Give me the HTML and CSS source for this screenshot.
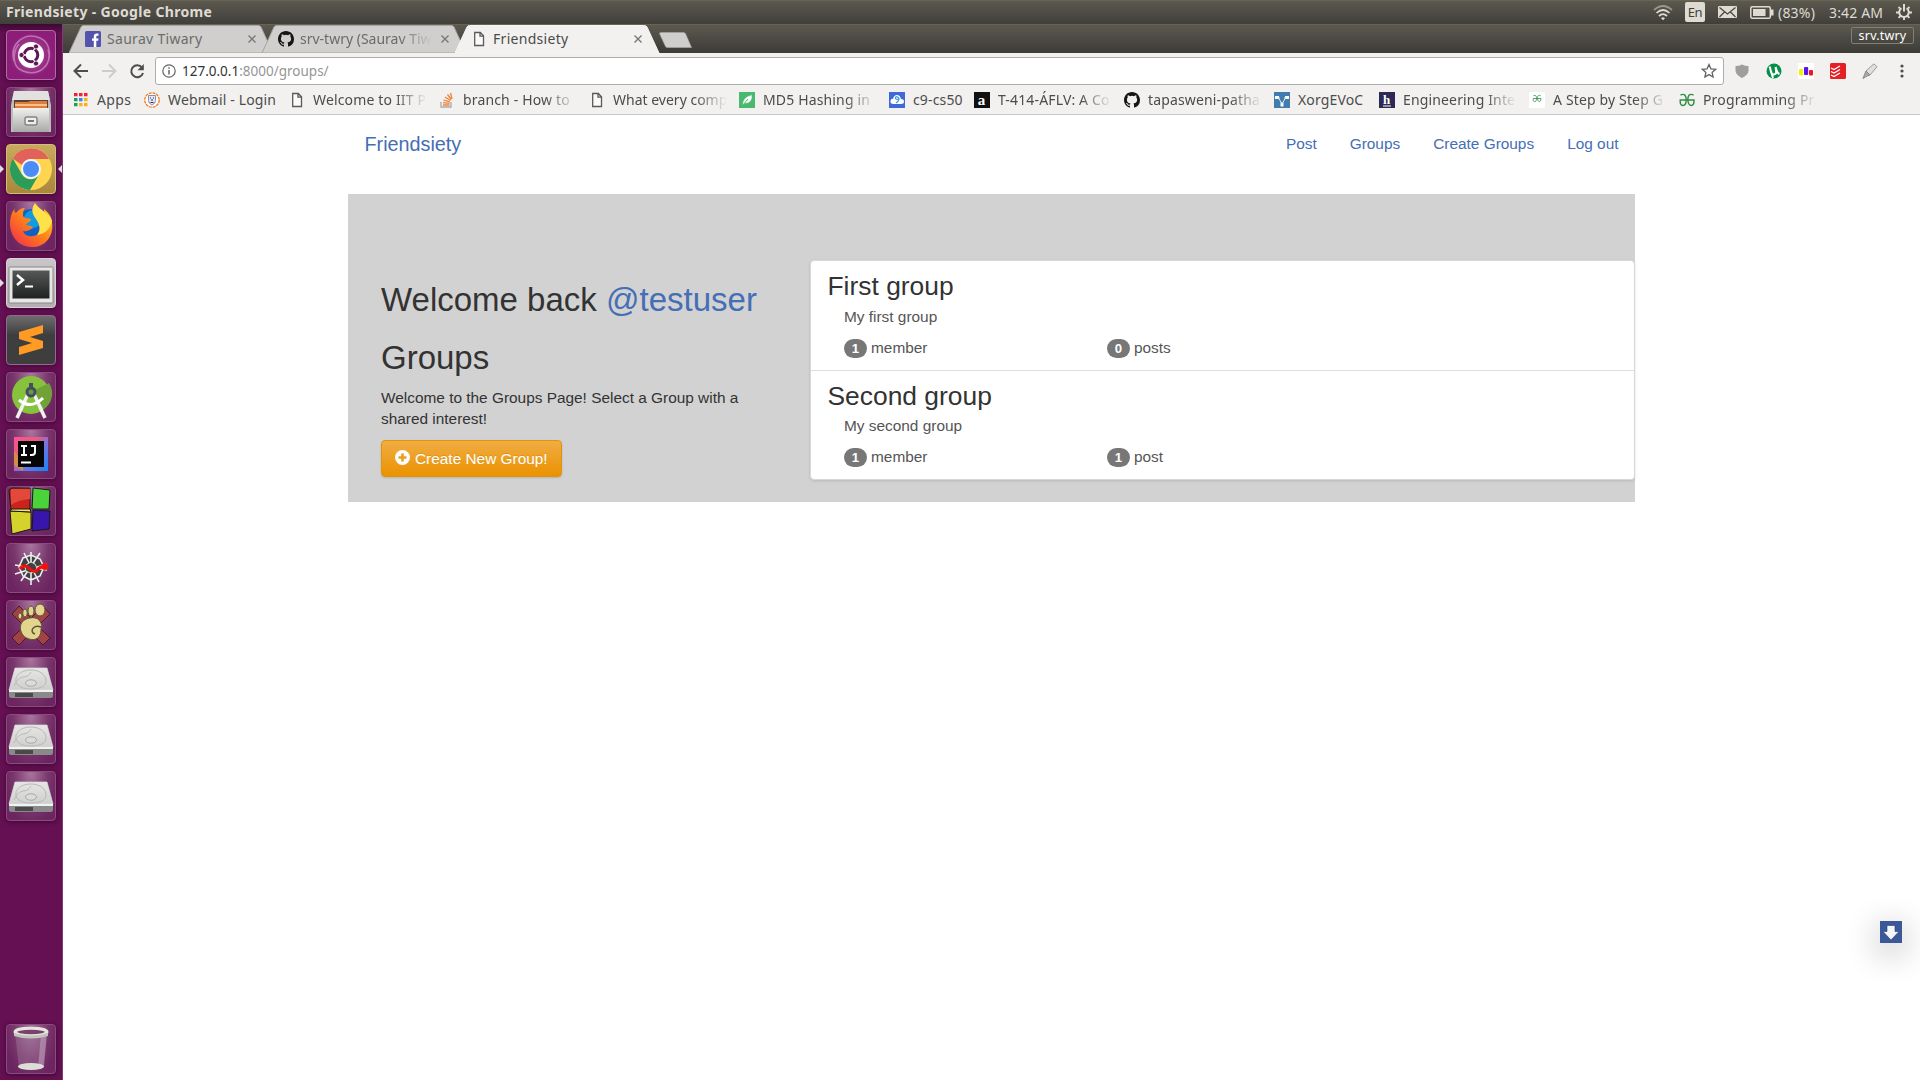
FILE: index.html
```html
<!DOCTYPE html>
<html lang="en">
<head>
<meta charset="utf-8">
<title>Friendsiety</title>
<link rel="stylesheet" href="styles.css">
</head>
<body>
<svg class="defs" width="0" height="0" aria-hidden="true">
  <defs>
    <linearGradient id="metal" x1="0" y1="0" x2="0" y2="1"><stop offset="0" stop-color="#f0f0ef"/><stop offset="1" stop-color="#a9a9a8"/></linearGradient>
    <linearGradient id="platter" x1="0" y1="0" x2="0" y2="1"><stop offset="0" stop-color="#e6e6e5"/><stop offset="1" stop-color="#cfcfce"/></linearGradient>
    <linearGradient id="dark" x1="0" y1="0" x2="0" y2="1"><stop offset="0" stop-color="#555856"/><stop offset="1" stop-color="#1f2221"/></linearGradient>
    <linearGradient id="foxfire" x1="1" y1="0" x2="0" y2="1"><stop offset="0" stop-color="#ffd52b"/><stop offset=".5" stop-color="#ff7b1c"/><stop offset="1" stop-color="#ef2352"/></linearGradient>
    <linearGradient id="rim" x1="0" y1="0" x2="1" y2="1"><stop offset="0" stop-color="#fe5196"/><stop offset=".35" stop-color="#ee5a7c"/><stop offset=".6" stop-color="#6b77e8"/><stop offset="1" stop-color="#1684fa"/></linearGradient>
    <symbol id="page" viewBox="0 0 16 16"><path d="M3.7 1.5h5.6l3.2 3.3v9.7H3.7zM9 1.7v3.4h3.3" fill="#fafafa" stroke="#5a5a5a" stroke-width="1.3"/></symbol>
    <symbol id="github" viewBox="0 0 16 16"><path fill="#161616" d="M8 0C3.58 0 0 3.58 0 8c0 3.54 2.29 6.53 5.47 7.59.4.07.55-.17.55-.38 0-.19-.01-.82-.01-1.49-2.01.37-2.53-.49-2.69-.94-.09-.23-.48-.94-.82-1.13-.28-.15-.68-.52-.01-.53.63-.01 1.08.58 1.23.82.72 1.21 1.87.87 2.33.66.07-.52.28-.87.51-1.07-1.78-.2-3.64-.89-3.64-3.95 0-.87.31-1.59.82-2.15-.08-.2-.36-1.02.08-2.12 0 0 .67-.21 2.2.82a7.6 7.6 0 0 1 4 0c1.53-1.04 2.2-.82 2.2-.82.44 1.1.16 1.92.08 2.12.51.56.82 1.27.82 2.15 0 3.07-1.87 3.75-3.65 3.95.29.25.54.73.54 1.48 0 1.07-.01 1.93-.01 2.2 0 .21.15.46.55.38A8 8 0 0 0 16 8c0-4.42-3.58-8-8-8z"/></symbol>
    <symbol id="gg" viewBox="0 0 16 16"><path d="M1.500 3C6 1 7.200 4 7.200 8s-1.500 5.500-3.500 5.500S1 11.500 1.200 8H15q.2 5.500-2.700 5.500T8.800 8c0-4 1.200-7 5.700-5" fill="none" stroke="#2f8d46" stroke-width="1.4"/></symbol>
    <symbol id="disk" viewBox="0 0 50 50"><path d="M9 11h32l6 22H3z" fill="url(#platter)" stroke="#ddd" stroke-width=".7"/><path d="M3 33h44v6a2 2 0 0 1-2 2H5a2 2 0 0 1-2-2z" fill="#8a8a8a"/><path d="M3 33h44v2H3z" fill="#f2f2f2"/><path d="M9 36h18v4H9z" fill="#4a4a4a"/><path d="M11 27c-4-7 3-14 14-14 9 0 15 5 15 11s-7 8-16 8c-6 0-11-2-13-5M8 29c6-14 12-5 17-14" fill="none" stroke="#b9b9b9"/><ellipse cx="25" cy="26" rx="5.500" ry="3.200" fill="#dcdcdc" stroke="#aaa"/></symbol>
    <symbol id="shape" viewBox="0 0 206 28"><path d="M0 28 12 2q.8-1.500 2.500-1.500h175q1.500 0 2.500 1.500l12 26z"/></symbol>
  </defs>
</svg>

<div class="desktop">
  <header class="panel">
    <span class="panel-title">Friendsiety - Google Chrome</span>
    <div class="indicators">
      <svg class="i-wifi" width="20" height="17" viewBox="0 0 20 17" fill="none" stroke="#dfdbd2" stroke-width="1.700"><path d="M1 6q9-8 18 0" stroke="#9b978d"/><path d="M3.500 9q6.500-6 13 0M6 12q4-3.600 8 0"/><path d="M8 14.200q2-1.700 4 0l-2 2z" fill="#dfdbd2" stroke="none"/></svg>
      <span class="lang">En</span>
      <svg class="i-mail" width="19" height="12" viewBox="0 0 19 12"><rect width="19" height="12" rx="1" fill="#dfdbd2"/><path d="M1.500 1.500 9.500 8l8-6.500M1.500 11l5-5M17.500 11l-5-5" fill="none" stroke="#45443f" stroke-width="1.200"/></svg>
      <svg class="i-bat" width="24" height="13" viewBox="0 0 24 13"><rect x=".8" y=".8" width="19.500" height="11.400" rx="1.500" fill="none" stroke="#dfdbd2" stroke-width="1.500"/><path d="M3 3h12.500v7H3zM21 3.500h2.500v6H21z" fill="#dfdbd2"/></svg>
      <span class="bat">(83%)</span>
      <span class="clock">3:42 AM</span>
      <svg width="16" height="16" viewBox="0 0 16 16" fill="none" stroke="#dfdbd2"><path d="M5.400 4.200a4.800 4.800 0 1 0 5.200 0" stroke-width="2"/><path d="M8 0v7.500" stroke-width="2"/><path d="M3.800 4.300 2.500 3M12.200 4.300 13.500 3M3 8.500H0M13 8.500h3M4.400 12l-1.800 1.800M11.600 12l1.800 1.800M8 13.500V16" stroke-width="1.900"/></svg>
    </div>
  </header>

  <aside class="launcher">
    <div class="tile dash"><svg viewBox="0 0 50 50"><path d="M8 31C3 12 20 2 34 8c11 5 12 20 5 29M42 19c5 17-10 28-25 22C5 37 7 21 13 14" fill="none" stroke="#d391c7" stroke-width="1.500" opacity=".7"/><circle cx="25" cy="25" r="13" fill="#fff"/><circle cx="25" cy="25" r="6.800" fill="none" stroke="#5e1752" stroke-width="3"/><path d="m25 25-10 0M25 25l5-9M25 25l5 9" stroke="#fff" stroke-width="1.300"/><g fill="#5e1752" stroke="#fff" stroke-width=".7"><circle cx="15.500" cy="25" r="2.500"/><circle cx="30" cy="16.500" r="2.500"/><circle cx="30" cy="33.500" r="2.500"/></g></svg></div>
    <div class="tile"><svg viewBox="0 0 50 50"><path d="M8 4h34l3 14v27H5V18z" fill="#bcbcbb"/><path d="M8 4h34l2 9H6z" fill="#e1e1e0"/><path d="M8 13h34v9H8z" fill="#56423a"/><path d="M9 15h13l2-1h17v8H9z" fill="#e07b38"/><path d="M9 17h32v2H9z" fill="#f6c08e"/><path d="M7 21h36v24H7z" fill="url(#metal)"/><rect x="19" y="30" width="12" height="8" rx="2" fill="#eee" stroke="#858585" stroke-width="1.500"/><path d="M22 33h6v2h-6z" fill="#777"/></svg></div>
    <div class="tile chrome run focus"><svg viewBox="0 0 50 50"><circle cx="25" cy="25" r="21" fill="#ffd54f"/><path d="M6.800 14.500A21 21 0 0 1 43.200 15H25a10 10 0 0 0-9 6z" fill="#e0625a"/><path d="M6.800 14.500A21 21 0 0 0 24 46l9-15.500a10 10 0 0 1-17 0z" fill="#2b9c5a"/><circle cx="25" cy="25" r="10" fill="#f4f4f4"/><circle cx="25" cy="25" r="8" fill="#4b8bf5"/></svg></div>
    <div class="tile"><svg viewBox="0 0 50 50"><circle cx="26" cy="25" r="17" fill="#1260c4"/><circle cx="27" cy="18" r="9" fill="#159ae0"/><path d="M9 7c-5 6-6 15-4 23 3 11 13 17 23 16 13-1 20-13 18-25-1-8-5-10-8-13 1 7 0 9-1 13 1 7-3 13-10 14-6 1-9-2-10-5 4 1 6-1 10-3-1-3-5-2-7-3 2-4 5-3 5-6-3-1-6 0-8-3 0-3 0-6 2-8-4 0-7 2-9 5-2-1-2-3-1-5z" fill="url(#foxfire)"/><path d="M29 2c-5 7-2 12 1 16 4 6 5 11 1 16 9-1 14-8 15-14-2-8-12-10-17-18z" fill="#ffe14a"/></svg></div>
    <div class="tile term run"><svg viewBox="0 0 50 50"><rect x="3" y="9" width="44" height="36" rx="1" fill="#e6e6e5" stroke="#888"/><rect x="6.500" y="12.500" width="37" height="28" fill="url(#dark)"/><path d="m11 17 6 5-6 5" fill="none" stroke="#fff" stroke-width="2.500"/><path d="M19 28.500h8" stroke="#fff" stroke-width="2"/></svg></div>
    <div class="tile sublime"><svg viewBox="0 0 50 50"><path d="m13 17 24-7v8l-13 4 13 4v7l-24 7v-8l13-4-13-4z" fill="#ff9a25"/></svg></div>
    <div class="tile"><svg viewBox="0 0 50 50"><circle cx="25" cy="23" r="19" fill="#87c23c"/><path d="m25 20 18-9a19 19 0 0 1-5 26z" fill="#70a237"/><path d="m22 22-11 24M28 22l11 24" stroke="#f1f1f1" stroke-width="3.500"/><path d="M13 28q12 10 24-2" fill="none" stroke="#fff" stroke-width="3"/><circle cx="25" cy="20" r="4" fill="#6b984c" stroke="#42505a" stroke-width="3"/><path d="M25 11v6" stroke="#42505a" stroke-width="4"/></svg></div>
    <div class="tile"><svg viewBox="0 0 50 50"><path d="M8 8h34v34H8z" fill="url(#rim)"/><path d="M8 22v14l9 6v-9z" fill="#d58d45"/><path d="M12 12h26v26H12z" fill="#060606"/><path d="M15 17h6M18 17v9M15 26h6M25 17h4v6q0 3-3 3h-2M15 33.500h10" stroke="#fff" stroke-width="2" fill="none"/></svg></div>
    <div class="tile"><svg viewBox="0 0 50 50" stroke="#181818"><path d="m3 4 3-2 18 0v22H5z" fill="#c9231b"/><path d="M5 3h19v10q-12 1-19 6z" fill="#e2493a" stroke="none"/><path d="m27 2 17 2-1 19H26z" fill="#4bd33a"/><path d="m4 25 21 1v17L6 48z" fill="#d5d32b"/><path d="m27 24 17 1-1 18-17 2z" fill="#3816ac"/><path d="m4 25 2-2h18l1 3z" fill="#edeb65"/></svg></div>
    <div class="tile"><svg viewBox="0 0 50 50"><path d="m17 15 8-3 9 4 4 8-4 9-9 4-8-4-4-9z" fill="#414141"/><path d="m17 15 8-3 9 4 4 8-4 9-9 4-8-4-4-9zM25 9v33M9 22l32 5M41 21 9 31M18 10l15 29M34 10 15 38" fill="none" stroke="#eee" stroke-width="1.600"/><path d="m21 21 4-2 4 2 2 4-3 4-4 1-4-2-1-4z" fill="#414141" stroke="#ddd"/><path d="M14 26c7-9 10 5 16 2 4-2 3-5 7-4" fill="none" stroke="#ef1010" stroke-width="3.200"/><circle cx="39" cy="23.500" r="3.600" fill="#ef1010"/></svg></div>
    <div class="tile"><svg viewBox="0 0 50 50"><path d="m6 14 7-8 12 12L37 6l7 8-12 12 12 12-7 7-12-12-12 12-7-7 12-12z" fill="#a04345" stroke="#4c1829"/><g fill="#e2d58e" stroke="#5e5334"><path d="M15 24c3-7 15-8 18-4 4 5 2 7 2 10 0 8-6 11-12 9-7-2-10-9-8-15z"/><ellipse cx="34" cy="10" rx="5" ry="6"/><ellipse cx="25" cy="11" rx="3" ry="5"/><ellipse cx="19" cy="13" rx="2.300" ry="4"/><ellipse cx="14" cy="16" rx="2" ry="3"/></g><path d="M35 27c-8-3-12 5-6 7" fill="none" stroke="#5e5334" stroke-width="1.500"/></svg></div>
    <div class="tile"><svg><use href="#disk"/></svg></div>
    <div class="tile"><svg><use href="#disk"/></svg></div>
    <div class="tile"><svg><use href="#disk"/></svg></div>
    <div class="tile trash"><svg viewBox="0 0 50 50"><path d="m9 10 4 33q12 5 24 0l4-33z" fill="#a887a6" opacity=".35"/><path d="m35 10-3 34 6-2 3-32z" fill="#d7c2d4" opacity=".4"/><ellipse cx="25" cy="42.500" rx="13" ry="3.500" fill="#deded9"/><ellipse cx="25" cy="8" rx="16" ry="3.800" fill="#7a416f" stroke="#e6e6df" stroke-width="3"/><path d="M8 9v3q17 5 34 0V9q-17 5-34 0" fill="#c3c3bd"/></svg></div>
  </aside>

  <div class="browser">
    <div class="tabstrip">
      <div class="tab"><svg class="tab-bg"><use href="#shape"/></svg>
        <svg class="fav" viewBox="0 0 16 16"><rect width="16" height="16" rx="1.500" fill="#5254ac"/><path d="M8.800 16V9.800H7V7.400h1.800V5.600c0-2 1-3.100 3-3.100h1.700v2.300h-1.200c-.8 0-1 .4-1 1v1.600h2.200l-.3 2.400h-1.900V16z" fill="#fff"/></svg>
        <span class="tab-text t1">Saurav Tiwary</span><svg class="x" viewBox="0 0 8 8"><path d="m.5.500 7 7m0-7-7 7"/></svg></div>
      <div class="tab"><svg class="tab-bg"><use href="#shape"/></svg>
        <svg class="fav"><use href="#github"/></svg>
        <span class="tab-text t2 fade">srv-twry (Saurav Tiw</span><svg class="x" viewBox="0 0 8 8"><path d="m.5.500 7 7m0-7-7 7"/></svg></div>
      <div class="tab active"><svg class="tab-bg"><use href="#shape"/></svg>
        <svg class="fav"><use href="#page"/></svg>
        <span class="tab-text t3">Friendsiety</span><svg class="x" viewBox="0 0 8 8"><path d="m.5.500 7 7m0-7-7 7"/></svg></div>
      <svg class="newtab" width="33" height="16" viewBox="0 0 33 16"><path d="M2 .5h22.500q1.500 0 2.200 1.500L32.500 15.500H8q-1 0-1.700-1.500L.7 2Q0 .5 2 .5z" fill="#cfcecc" stroke="#aaa9a5" stroke-width=".6"/></svg>
      <span class="profile">srv.twry</span>
    </div>

    <div class="toolbar">
      <svg class="nav" viewBox="0 0 16 16"><path d="M15 8H2M8 1.500 1.500 8 8 14.500" stroke="#4d4d4d"/></svg>
      <svg class="nav" viewBox="0 0 16 16"><path d="M1 8h13M8 1.500 14.500 8 8 14.500" stroke="#cdcccb"/></svg>
      <svg class="nav" viewBox="0 0 16 16"><path d="M13 4.500A6 6 0 1 0 14 10" stroke="#4d4d4d"/><path d="M14.800 1v6.300H8.500z" fill="#4d4d4d"/></svg>
      <div class="omnibox">
        <svg width="14" height="14" viewBox="0 0 14 14"><circle cx="7" cy="7" r="6.200" fill="none" stroke="#666" stroke-width="1.200"/><path d="M7 6v4.500M7 3.200v1.600" stroke="#666" stroke-width="1.500"/></svg>
        <span class="url">127.0.0.1<span class="dim">:8000/groups/</span></span>
        <svg class="star" width="16" height="16" viewBox="0 0 16 16"><path d="m8 1.500 1.900 4.300 4.700.5-3.500 3.100 1 4.600L8 11.600 3.900 14l1-4.600L1.400 6.300l4.700-.5z" fill="none" stroke="#646464" stroke-width="1.300"/></svg>
      </div>
      <div class="exts">
        <svg viewBox="0 0 16 16"><path d="M8 1.500q3 1.500 6.500 1.500v5Q14 12 8 15 2 12 1.500 8V3Q5 3 8 1.500z" fill="#9e9e9e"/></svg>
        <svg viewBox="0 0 16 16"><circle cx="8" cy="8" r="7.500" fill="#078f49"/><path d="M3.500 3.500c2 4 .5 7.500 4 8 3.500 0 3-3 2-7.500M9.500 4c1.500 3 1 6 4 7M5.500 10l1.500 5" fill="none" stroke="#fff" stroke-width="2"/></svg>
        <svg viewBox="0 0 16 16"><path d="M0 0h16v16H0z" fill="#fff"/><rect x="1" y="6" width="4" height="6.500" rx="1" fill="#f5f000"/><rect x="6" y="4" width="4.200" height="8" rx="1" fill="#5a10f5"/><rect x="11" y="7" width="4" height="5.500" rx="1" fill="#f51717"/></svg>
        <svg viewBox="0 0 16 16"><rect width="16" height="16" rx="1.500" fill="#e41f25"/><path d="m1 5 3 1.500L10 3M1 8.500 4 10l6-3.500M1 12l3 1.500L10 10" fill="none" stroke="#fff" stroke-width="1.200"/></svg>
        <svg viewBox="0 0 16 16"><path d="M4 8 12 .8l3 3L8 12z" fill="#e0e0e0" stroke="#999"/><path d="m4 8 4 4-3 1-4 2.500 1.500-4z" fill="#aaa" stroke="#888"/></svg>
        <svg viewBox="0 0 16 16" fill="#4d4d4d"><circle cx="8" cy="3" r="1.600"/><circle cx="8" cy="8" r="1.600"/><circle cx="8" cy="13" r="1.600"/></svg>
      </div>
    </div>

    <div class="bookmarks">
      <div class="bm"><svg viewBox="0 0 16 16"><path d="M0 1h3.500v3.300H0zM5 1h3.500v3.300H5zM10 1h3.500v3.300H10z" fill="#f02236"/><path d="M0 6h3.500v3.300H0zM0 11h3.500v3.300H0z" fill="#15a15c"/><path d="M5 6h3.500v3.300H5z" fill="#4381f3"/><path d="M10 6h3.500v3.300H10zM5 11h3.500v3.300H5zM10 11h3.500v3.300H10z" fill="#f8b316"/></svg><span class="apps">Apps</span></div>
      <div class="bm"><svg viewBox="0 0 16 16"><circle cx="8" cy="8" r="7.200" fill="#fff" stroke="#ed7d22" stroke-width="1.300" stroke-dasharray="3 .8"/><path d="M4.500 3.500h7v5q0 3-3.500 4.500-3.500-1.500-3.500-4.500z" fill="#e6e7ef" stroke="#70749a" stroke-width=".8"/><path d="M6 6h1M9 6h1M8 7v2M6.500 10.500h3" stroke="#292d58"/></svg><span>Webmail - Login</span></div>
      <div class="bm"><svg><use href="#page"/></svg><span class="fade">Welcome to IIT P</span></div>
      <div class="bm"><svg viewBox="0 0 16 16" fill="none"><path d="M2 10v5h10v-5" stroke="#aaa" stroke-width="1.300"/><path d="M4 13h6.500M4 10.700l6.500.7M4.500 8l6.300 1.800M6 5l5.500 3.500M8.500 2.500l3.800 5M11.500 1l1.500 6" stroke="#ef8236" stroke-width="1.300"/></svg><span class="fade">branch - How to</span></div>
      <div class="bm"><svg><use href="#page"/></svg><span class="fade what">What every comp</span></div>
      <div class="bm"><svg viewBox="0 0 16 16"><path d="M0 0h16v16H0z" fill="#48b96f"/><path d="M4 13q0-8 8.500-9.500Q13 11 6 11l4-4" fill="#fff" stroke="#fff" stroke-width=".5"/><path d="m4 13 5-6" stroke="#48b96f"/></svg><span class="fade">MD5 Hashing in</span></div>
      <div class="bm"><svg viewBox="0 0 16 16"><path d="M0 0h16v16H0z" fill="#4168d8"/><path d="M4.500 12Q1 12 1.500 9T4 7q1-4 4-4t4 4q3 0 3 2.500T12 12z" fill="#fff"/><path d="M9.500 7q-3 1-3-1t2-1 1.200 3T7 11" fill="none" stroke="#459ddd" stroke-width="1.300"/></svg><span>c9-cs50</span></div>
      <div class="bm"><svg viewBox="0 0 16 16"><path d="M0 0h16v16H0z" fill="#111"/><text x="3.800" y="13" class="g-a">a</text></svg><span class="fade">T-414-ÁFLV: A Co</span></div>
      <div class="bm"><svg><use href="#github"/></svg><span class="fade">tapasweni-patha</span></div>
      <div class="bm"><svg viewBox="0 0 16 16"><path d="M0 0h16v16H0z" fill="#427bad"/><path d="M1 4h4v3H1zM11 4h4v3h-4zM6.500 10.500h3v4h-3z" fill="#fff"/><path d="m4 5 4 7 4-7M4 6h2M10 6h2" fill="none" stroke="#dfeaf5"/></svg><span>XorgEVoC</span></div>
      <div class="bm"><svg viewBox="0 0 16 16"><path d="M0 0h16v16H0z" fill="#2c2a54"/><text x="4" y="12" class="g-h">h</text><path d="M4 14h8" stroke="#fff"/></svg><span class="fade">Engineering Inte</span></div>
      <div class="bm"><svg viewBox="0 0 16 16"><path d="M0 0h16v16H0z" fill="#fff"/><use href="#gg" x="1" y="2" width="14" height="9"/></svg><span class="fade">A Step by Step G</span></div>
      <div class="bm"><svg><use href="#gg"/></svg><span class="fade">Programming Pr</span></div>
    </div>

    <main class="page">
      <div class="container">
        <nav class="navbar">
          <a class="brand">Friendsiety</a>
          <div class="links"><a>Post</a><a>Groups</a><a>Create Groups</a><a>Log out</a></div>
        </nav>
        <section class="jumbo">
          <div class="intro">
            <h1>Welcome back <a>@testuser</a></h1>
            <h1>Groups</h1>
            <p>Welcome to the Groups Page! Select a Group with a shared interest!</p>
            <a class="btn"><svg width="15" height="15" viewBox="0 0 15 15"><circle cx="7.500" cy="7.500" r="7.500" fill="#fff"/><path d="M7.500 3.500v8M3.500 7.500h8" stroke="#eb9f1c" stroke-width="2.600"/></svg>Create New Group!</a>
          </div>
          <div class="list">
            <article class="group">
              <h3>First group</h3>
              <p>My first group</p>
              <div class="stats"><span><b>1</b>member</span><span><b>0</b>posts</span></div>
            </article>
            <article class="group">
              <h3>Second group</h3>
              <p>My second group</p>
              <div class="stats"><span><b>1</b>member</span><span><b>1</b>post</span></div>
            </article>
          </div>
        </section>
      </div>
      <div class="float"><svg width="22" height="22" viewBox="0 0 22 22"><path d="M0 0h22v22H0z" fill="#3b5998"/><path d="M7 4.500h8v6h4L11 19l-8-8.500h4z" fill="#f4f6fa" stroke="#253f78" stroke-width=".6"/></svg></div>
    </main>
  </div>
</div>
</body>
</html>
```
FILE: styles.css
```css
* { box-sizing: border-box; }
body { margin: 0; overflow: hidden; font-family: "Noto Sans", sans-serif; background: #fff; }
.defs { position: absolute; }
.desktop { display: grid; grid-template: 24px 1056px / 63px 1857px; width: 1920px; height: 1080px; }

/* top panel */
.panel { grid-column: 1 / 3; display: flex; justify-content: space-between; align-items: center; padding: 0 8px 1px 6px; background: linear-gradient(#5b584f, #403f3a); border-top: 1px solid #67644f; color: #dfdbd2; font-size: 14px; }
.panel-title { margin-top: -1px; font-weight: 700; font-size: 14px; letter-spacing: .33px; }
.indicators { display: flex; align-items: center; }
.i-wifi { margin-right: 12px; }
.lang { width: 20px; height: 20px; margin-right: 13px; border-radius: 2px; background: #dfdbd2; color: #403f3a; font-size: 13px; line-height: 20px; text-align: center; letter-spacing: -.5px; }
.i-mail { margin-right: 13px; }
.i-bat { margin-right: 4px; }
.bat { width: 51px; letter-spacing: .2px; }
.clock { width: 67px; letter-spacing: .15px; white-space: nowrap; }

/* launcher */
.launcher { display: flex; flex-direction: column; gap: 7px; padding: 6px 0 6px 6px; background: linear-gradient(#3d0932, #641052 9px); border-right: 1px solid #803a72; }
.tile { position: relative; flex: none; width: 50px; height: 50px; border-radius: 4px; border: 1px solid #8d4a7e; background: radial-gradient(ellipse at 50% 0, #a9769f, #79386d 50%, #6c2560 80%); box-shadow: 0 1px 4px #3c0832; }
.tile svg { display: block; width: 50px; height: 50px; margin: -1px; }
.dash { background: radial-gradient(circle, #b25aa1, #8c1d78 65%); border-color: #b66aa9; }
.chrome { background: linear-gradient(#c9a95e, #a9883c); border-color: #d4bd7b; }
.term { background: linear-gradient(#c9c5c9, #b4adb3); border-color: #d8d2d6; }
.sublime { background: linear-gradient(#6d6d6d, #3e3e3e 40%); border-color: #966891; }
.trash { margin-top: auto; }
.run::before { content: ""; position: absolute; left: -7px; top: 20px; border: solid transparent; border-width: 4px 0 4px 4px; border-left-color: #ddd; }
.focus::after { content: ""; position: absolute; right: -7px; top: 20px; border: solid transparent; border-width: 4px 4px 4px 0; border-right-color: #ddd; }

/* tab strip */
.browser { display: grid; grid-template-rows: 29px 33px 29px 965px; min-width: 0; }
.tabstrip { display: flex; align-items: flex-start; padding: 0 6px; background: linear-gradient(#5b594f, #3c3b36); border-top: 1px solid #67644f; }
.tab { position: relative; display: flex; align-items: center; flex: none; width: 206px; height: 28px; margin-right: -13px; padding: 0 19px 0 16px; isolation: isolate; }
.tab-bg { position: absolute; inset: 0; width: 206px; height: 28px; z-index: -1; fill: #d0cfcd; stroke: #a5a4a0; stroke-width: 1; }
.active { z-index: 2; }
.active .tab-bg { fill: #f2f1ef; stroke: #f7f6f5; }
.fav { width: 16px; height: 16px; margin-right: 6px; flex: none; }
.tab-text { flex: 1; overflow: hidden; white-space: nowrap; font-size: 14px; letter-spacing: .3px; line-height: 22px; color: #6b6b6a; }
.active .tab-text { color: #4b4b4a; }
.t2 { letter-spacing: 0; margin-right: 9px; }
.x { width: 8px; height: 8px; flex: none; stroke: #777; stroke-width: 1.400; }
.newtab { margin: 7px 0 0 11px; }
.profile { width: 63px; height: 17px; margin: 2px 0 0 auto; border: 1px solid #80807a; border-radius: 2px; color: #fff; font-size: 12.500px; line-height: 15px; letter-spacing: .2px; text-align: center; }
.fade { -webkit-mask-image: linear-gradient(90deg, #000 calc(100% - 32px), transparent); mask-image: linear-gradient(90deg, #000 calc(100% - 32px), transparent); }

/* toolbar */
.toolbar { display: flex; align-items: center; padding: 3px 9px 0 10px; background: #f2f1ef; }
.nav { width: 16px; height: 16px; margin-right: 12px; fill: none; stroke-width: 2; }
.nav:nth-child(3) { margin-right: 10px; }
.omnibox { display: flex; align-items: center; width: 1569px; height: 28px; padding: 0 6px; border: 1px solid #aeadab; border-radius: 3px; background: #fff; }
.url { margin-left: 6px; font-size: 13.500px; letter-spacing: 0; color: #333; }
.dim { color: #969696; }
.star { margin-left: auto; }
.exts { display: flex; gap: 16px; margin-left: 10px; }
.exts svg { width: 16px; height: 16px; }

/* bookmarks */
.bookmarks { display: grid; grid-template-columns: 70px 145px 150px 150px 150px 150px 85px 150px 150px 105px 150px 150px 150px; padding-left: 11px; background: #f2f1ef; border-bottom: 1px solid #c9c8c6; }
.bm { display: flex; align-items: center; min-width: 0; height: 28px; }
.bm svg { width: 16px; height: 16px; flex: none; }
.bm span { margin-left: 8px; overflow: hidden; white-space: nowrap; font-size: 14px; letter-spacing: .15px; line-height: 20px; color: #4c4c4c; }
.bm .fade { width: 114px; }
.bm .what { letter-spacing: 0; }
.bm .apps { margin-left: 7px; letter-spacing: .4px; }
.g-a { font: bold 15px "Liberation Serif", serif; fill: #fff; }
.g-h { font: bold 13px "Liberation Serif", serif; fill: #fff; }

/* page */
.page { position: relative; background: #fff; font-family: "Liberation Sans", Arial, sans-serif; font-size: 15.400px; line-height: 22px; color: #333; }
.container { width: 1287px; margin-left: 285px; }
.navbar { display: flex; justify-content: space-between; height: 79px; padding: 17px 16.500px 0; }
.page a { color: #446eb5; }
.brand { font-size: 19.800px; line-height: 24px; }
.links { display: flex; gap: 33px; padding-top: 1px; }
.jumbo { display: grid; grid-template-columns: 462px 825px; height: 308px; padding-top: 66px; background: #d2d2d2; }
.intro { padding: 22px 33px 0; }
h1, h3, p { margin: 0; font-weight: 400; }
.intro h1 { font-size: 33px; line-height: 36px; margin-bottom: 22px; }
.intro h1 + h1 { margin-bottom: 11px; }
.intro p { margin-bottom: 11px; line-height: 21px; }
.page .btn { display: inline-flex; align-items: center; gap: 5px; width: 181px; height: 37px; padding: 0 13px; border: 1px solid #e3920c; border-radius: 4px; background: linear-gradient(#f0ad43, #eb9200); box-shadow: 0 1px 2px rgba(0,0,0,.15); color: #fff; white-space: nowrap; text-shadow: 0 -1px 0 rgba(0,0,0,.1); }
.btn svg { margin-top: -3px; flex: none; }
.list { height: 220px; display: grid; grid-template-rows: 110px 108px; border: 1px solid #d8d8d8; border-radius: 4px; background: #fff; box-shadow: 0 1px 3px rgba(0,0,0,.12); }
.group { padding: 11px 16.500px 0; }
.group:first-child { border-bottom: 1px solid #ddd; }
.group h3 { font-size: 26.400px; line-height: 29px; margin-bottom: 5px; }
.group + .group h3 { margin-bottom: 4px; }
.group p { padding-left: 16.500px; color: #555; }
.stats { display: grid; grid-template-columns: 263px 263px; margin-top: 9px; padding-left: 16.500px; color: #555; }
.stats b { display: inline-block; width: 23px; height: 19px; margin-right: 4px; border-radius: 10px; background: #777; color: #fff; font-size: 13.200px; line-height: 19px; text-align: center; vertical-align: 0; }
.float { position: absolute; right: 18px; top: 806px; width: 22px; height: 22px; box-shadow: 0 8px 30px 6px rgba(0,0,0,.16); }
```
